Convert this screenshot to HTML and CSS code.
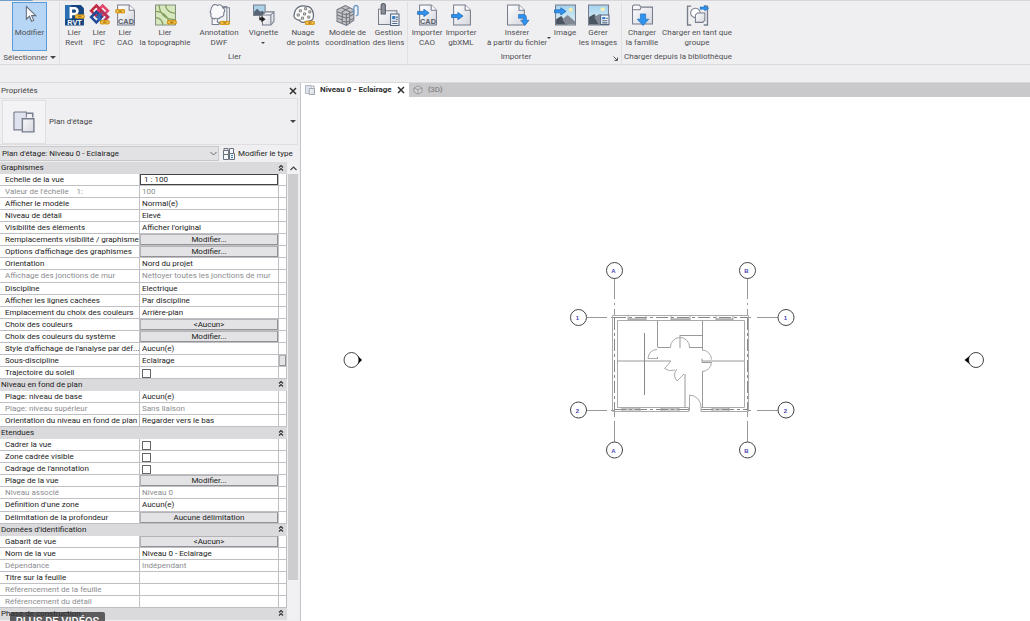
FILE: index.html
```html
<!DOCTYPE html>
<html lang="fr">
<head>
<meta charset="utf-8">
<title>Niveau 0 - Eclairage</title>
<link rel="stylesheet" href="styles.css">
</head>
<body>
<svg class="defs" aria-hidden="true">
  <defs>
    <linearGradient id="sheet" x1="0" y1="0" x2="1" y2="1"><stop offset="0" stop-color="#fff"/><stop offset="1" stop-color="#d5d7df"/></linearGradient>
    <linearGradient id="sky" x1="0" y1="0" x2="0" y2="1"><stop offset="0" stop-color="#a4d3ee"/><stop offset="1" stop-color="#e6f3f6"/></linearGradient>
    <symbol id="chain" viewBox="0 0 11 5"><rect x=".8" y=".9" width="5" height="3.2" rx="1.6" fill="#f7cf62" stroke="#d89a18" stroke-width="1.5"/><rect x="5.2" y=".9" width="5" height="3.2" rx="1.6" fill="#f7cf62" stroke="#d89a18" stroke-width="1.5"/><path d="M3.5 2.5h4" stroke="#a87718"/></symbol>
    <symbol id="arrow" viewBox="0 0 12 8"><path d="M.5 2.6h6V.5L11.5 4 6.500 7.500V5.400h-6z" fill="#2f92ee" stroke="#1b66b5" stroke-width=".7"/></symbol>
    <symbol id="views" viewBox="0 0 20 20"><path d="M1 1h11v5M1 1v16h7" fill="none" stroke="#777d8c" stroke-width="1.300"/><path d="M1.500 1.500h10v5H8.500v10h-7z" fill="#dfe3ef"/><path d="M12 2h6v4M8.500 7h10.500v12H8.500z" fill="url(#sheet)" stroke="#777d8c" stroke-width="1.300"/></symbol>
    <symbol id="fold" viewBox="0 0 6 8"><path d="M1 3.500 3 1.500l2 2M1 6.500l2-2 2 2" fill="none" stroke="#333" stroke-width="1.200"/></symbol>
  </defs>
</svg>

<header class="ribbon">
  <section class="group group-select">
    <div class="tools">
      <button class="tool active"><svg class="icon" viewBox="0 0 20 20"><path d="M7 2v12l3-2.800 2 4.800 2-.9-2-4.500h4z" fill="#fff" stroke="#646b78"/></svg><span>Modifier</span></button>
    </div>
    <button class="group-title">Sélectionner <i class="caret"></i></button>
  </section>
  <section class="group group-link">
    <div class="tools">
      <button class="tool"><svg class="icon" viewBox="0 0 20 20"><path d="M1 .5h15l3 3V20H1z" fill="#164680"/><path d="M1 .5h6V14H1z" fill="#2a6fb4"/><path d="M6.500 13V3.500h3.500a2.800 2.800 0 0 1 0 5.600H7" fill="none" stroke="#fff" stroke-width="2.400"/><text x="10" y="19.300" class="tag tag-light">RVT</text><use href="#chain" x="10" y="9" width="10" height="5"/></svg><span>Lier<br>Revit</span></button>
      <button class="tool"><svg class="icon" viewBox="0 0 20 20"><g fill="none" stroke-width="2.400"><path d="m2 6 5-5 5 5-5 5z" stroke="#c0283c"/><path d="m8 6 5-5 5 5-5 5z" stroke="#e4446b"/><path d="m2 12 5-5 5 5-5 5z" stroke="#234b97"/><path d="m8 12 5-5 5 5-5 5z" stroke="#2e67b4"/><path d="m7 1 5 5-2 2M13 7l5 5-4 4" stroke="#c52f50"/></g><use href="#chain" x="10" y="14.500" width="10" height="5"/></svg><span>Lier<br>IFC</span></button>
      <button class="tool"><svg class="icon" viewBox="0 0 20 20"><path d="M2.500 .5h11l5 5v14h-16z" fill="url(#sheet)" stroke="#777d8c"/><path d="M13.500.5v5h5" fill="#fff" stroke="#777d8c"/><text x="10.500" y="18.300" class="tag">CAD</text><use href="#chain" x="0" y="4" width="10" height="5"/></svg><span>Lier<br>CAO</span></button>
      <button class="tool"><svg class="icon" viewBox="0 0 20 20"><path d="M.5.500h19v19H.500z" fill="#d8e8be" stroke="#85907e"/><path d="M.5 12.500a7 7 0 0 1 7 7M.500 6.500a13 13 0 0 1 13 13M4 .5c0 8 6 14 15 14M10 .5c0 4 4 8 9.500 8" fill="none" stroke="#86a263" stroke-width="1.300"/><use href="#chain" x="11" y="14.500" width="10" height="5"/></svg><span>Lier<br>la topographie</span></button>
      <button class="tool"><svg class="icon" viewBox="0 0 20 20"><path d="M8 3h11.500v15H8zM5 2h12v15H5z" fill="#eef0f5" stroke="#858a96"/><path d="M3 2a3 3 0 0 1 5-1 3 3 0 0 1 5 2 3 3 0 0 1 1 5 3 3 0 0 1-3 4 4 4 0 0 1-5 1 3 3 0 0 1-4-4 3 3 0 0 1 0-4 3 3 0 0 1 1-3zM3 13v6h7" fill="#fafafc" stroke="#777d8c"/><use href="#chain" x="10" y="15" width="10" height="5"/></svg><span>Annotation<br>DWF</span></button>
      <button class="tool"><svg class="icon" viewBox="0 0 20 20"><path d="M.5.500h11v10H.500z" fill="#add1e7" stroke="#777d8c"/><path d="M1 10V7l3-3 3 3 2-1 2 2v2z" fill="#596474"/><path d="m9 10 3-3h8v9l-3 3.500H9z" fill="url(#sheet)" stroke="#777d8c"/><path d="M9 10h8v9M17 10l3-3" fill="none" stroke="#777d8c"/><path d="M6 11v4h2v2l4-3-4-3v2" fill="#222"/></svg><span>Vignette<br><i class="caret small"></i></span></button>
      <button class="tool"><svg class="icon" viewBox="0 0 20 20"><path d="M2 6C4 2 8 1 12 1.500c5 0 7 4 7.500 8 .5 5-2 7-7 6.500-2 2-6 1-6-1-4 0-6-3-5.500-5z" fill="#fcfcfd" stroke="#666c78" stroke-width="1.200"/><path d="M6 5h2v2H6zM11 3h2v2h-2zM15 6h2v2h-2zM4 9h2v2H4zM10 8h2v2h-2zM8 12h2v2H8zM14 11h2v2h-2z" fill="#ddd" stroke="#666" stroke-width=".7"/><use href="#chain" x="11" y="15" width="10" height="5"/></svg><span>Nuage<br>de points</span></button>
      <button class="tool"><svg class="icon" viewBox="0 0 20 20"><path d="m0 5 8-4 8 4v10l-7 5-9-4z" fill="#c2c4c9" stroke="#74777f"/><path d="m0 10 9 3 7-4M4 3l8 4v11M12 3 5 7v11M9 8v12M0 7l9 3 7-4M1 13l8 4 7-4" fill="none" stroke="#74777f"/><path d="M16 9V3a2 2 0 0 1 4 0v6a1.500 1.500 0 0 1-2 1.500" fill="none" stroke="#6a9bc9" stroke-width="1.300"/></svg><span>Modèle de<br>coordination</span></button>
      <button class="tool"><svg class="icon" viewBox="0 0 20 20"><path d="M.5 4.500h4L6 6h12v13H.500z" fill="url(#sheet)" stroke="#777d8c"/><path d="M3 1a2 2 0 0 1 4 0v8H3z" fill="#8c9099" stroke="#555b65"/><path d="M12 9h8v11h-8z" fill="#f2f6fb" stroke="#536681"/><path d="M13.500 11h3v3h-3z" fill="#347bc0"/><path d="M17 12h2M17 14h2M13.500 16h5M13.500 18h5" stroke="#536681"/></svg><span>Gestion<br>des liens</span></button>
    </div>
    <h2 class="group-title">Lier</h2>
  </section>
  <section class="group group-import">
    <div class="tools">
      <button class="tool"><svg class="icon" viewBox="0 0 20 20"><path d="M2.500.500h11l5 5v14h-16z" fill="url(#sheet)" stroke="#777d8c"/><path d="M13.500.500v5h5" fill="#fff" stroke="#777d8c"/><use href="#arrow" x="0" y="4" width="12" height="8"/><text x="10.500" y="18.500" class="tag">CAD</text></svg><span>Importer<br>CAO</span></button>
      <button class="tool"><svg class="icon" viewBox="0 0 20 20"><path d="M2.500.500h11l5 5v14h-16z" fill="url(#sheet)" stroke="#777d8c"/><path d="M13.500.500v5h5" fill="#fff" stroke="#777d8c"/><use href="#arrow" x="0" y="7" width="12" height="8"/></svg><span>Importer<br>gbXML</span></button>
      <button class="tool"><svg class="icon" viewBox="0 0 20 20"><path d="M.5.500h11l5 5v14H.500z" fill="url(#sheet)" stroke="#777d8c"/><path d="M11.500.500v5h5" fill="#fff" stroke="#777d8c"/><path d="M11 9.500h4.500q3 0 3 3V15H21l-4 5-4-5h2.500v-2H11z" fill="#2f92ee" stroke="#1b66b5" stroke-width=".6"/></svg><span>Insérer<br>à partir du fichier</span><i class="caret small side"></i></button>
      <button class="tool"><svg class="icon" viewBox="0 0 20 20"><path d="M.5.500h19v19H.500z" fill="url(#sky)" stroke="#777d8c"/><circle cx="15" cy="5" r="2" fill="#f6edae"/><path d="m1 14 5-3 6 8H1z" fill="#4b5562"/><path d="m7 14 5-4 7 6v3H10z" fill="#828994"/><use href="#arrow" x="-1" y="2.500" width="12" height="8"/></svg><span>Image</span></button>
      <button class="tool"><svg class="icon" viewBox="0 0 20 20"><path d="M.5.500h19v19H.500z" fill="url(#sky)" stroke="#777d8c"/><circle cx="14" cy="4.500" r="2" fill="#f6edae"/><path d="m1 12 5-3 7 10H1z" fill="#4b5562"/><path d="m6 12 5-3 8 6v4h-9z" fill="#828994"/><path d="M12 10h8v9h-8z" fill="#f2f6fb" stroke="#536681"/><path d="M13.500 12h3v2h-3z" fill="#347bc0"/><path d="M17 13h2M13.500 15.500h5M13.500 17.500h5" stroke="#536681"/></svg><span>Gérer<br>les images</span></button>
    </div>
    <h2 class="group-title">Importer</h2><button class="launcher" aria-label="Options d'importation"><svg viewBox="0 0 5 5"><path d="M.5 .5 4 4M4.500 1.500v3h-3" fill="none" stroke="#555"/></svg></button>
  </section>
  <section class="group group-load">
    <div class="tools">
      <button class="tool"><svg class="icon" viewBox="0 0 20 20"><path d="M.5 1.500v17h19v-16h-11L7 .5H2z" fill="url(#sheet)" stroke="#777d8c"/><path d="M.5 5h7l1-2" fill="none" stroke="#777d8c"/><path d="M8 9h5v5h3l-5.500 6L5 14h3z" fill="#2f92ee" stroke="#1b66b5" stroke-width=".6"/></svg><span>Charger<br>la famille</span></button>
      <button class="tool"><svg class="icon" viewBox="0 0 20 20"><path d="M4 1.500H.500v18H4M16 1.500h3.500v18H16" fill="none" stroke="#777d8c" stroke-width="1.300"/><circle cx="8" cy="8" r="4.500" fill="#fff" stroke="#777d8c"/><path d="m8 10 2-2h7v7l-2 2H8z" fill="url(#sheet)" stroke="#777d8c"/><use href="#arrow" x="12" y="0" width="9" height="7"/></svg><span>Charger en tant que<br>groupe</span></button>
    </div>
    <h2 class="group-title">Charger depuis la bibliothèque</h2>
  </section>
</header>
<div class="option-bar"></div>

<div class="workspace">
  <aside class="properties">
    <div class="panel-head"><h2>Propriétés</h2><button class="close" aria-label="Fermer les propriétés"><svg viewBox="0 0 8 8"><path d="m1 1 6 6M7 1 1 7" stroke="#333" stroke-width="1.500"/></svg></button></div>
    <button class="type-picker"><span class="thumb"><svg viewBox="0 0 20 20"><use href="#views"/></svg></span><span>Plan d'étage</span><i class="caret"></i></button>
    <div class="instance">
      <div class="select-wrap"><select aria-label="Vue"><option>Plan d'étage: Niveau 0 - Eclairage</option></select><svg viewBox="0 0 7 5"><path d="m.5 1 3 3 3-3" fill="none" stroke="#666"/></svg></div>
      <button class="edit-type"><svg viewBox="0 0 12 12"><path d="M.5 2.500h5v4h-5zM.5 6.500h5v5h-5zM6.500 .500h4v5h-4zM1 2.500v-2h4v2M6.500 5.500h5v6h-5z" fill="#f4f6fa" stroke="#68707e"/><path d="M8 7.500h2M8 9.500h2" stroke="#347bc0"/></svg>Modifier le type</button>
    </div>
    <div class="grid-area">
      <table>
        <tbody>
          <tr class="section"><th colspan="3"><button>Graphismes<svg><use href="#fold"/></svg></button></th></tr>
          <tr><th><label for="scale">Echelle de la vue</label></th><td><input class="field" id="scale" type="text" value="1 : 100"></td><td></td></tr>
          <tr class="off"><th>Valeur de l'échelle &nbsp;&nbsp; 1:</th><td>100</td><td></td></tr>
          <tr><th>Afficher le modèle</th><td>Normal(e)</td><td></td></tr>
          <tr><th>Niveau de détail</th><td>Elevé</td><td></td></tr>
          <tr><th>Visibilité des éléments</th><td>Afficher l'original</td><td></td></tr>
          <tr><th id="p1">Remplacements visibilité / graphisme</th><td><button class="cell" aria-describedby="p1">Modifier...</button></td><td></td></tr>
          <tr><th id="p2">Options d'affichage des graphismes</th><td><button class="cell" aria-describedby="p2">Modifier...</button></td><td></td></tr>
          <tr><th>Orientation</th><td>Nord du projet</td><td></td></tr>
          <tr class="off"><th>Affichage des jonctions de mur</th><td>Nettoyer toutes les jonctions de mur</td><td></td></tr>
          <tr><th>Discipline</th><td>Electrique</td><td></td></tr>
          <tr><th>Afficher les lignes cachées</th><td>Par discipline</td><td></td></tr>
          <tr><th>Emplacement du choix des couleurs</th><td>Arrière-plan</td><td></td></tr>
          <tr><th id="p3">Choix des couleurs</th><td><button class="cell" aria-describedby="p3">&lt;Aucun&gt;</button></td><td></td></tr>
          <tr><th id="p4">Choix des couleurs du système</th><td><button class="cell" aria-describedby="p4">Modifier...</button></td><td></td></tr>
          <tr><th>Style d'affichage de l'analyse par déf...</th><td>Aucun(e)</td><td></td></tr>
          <tr><th>Sous-discipline</th><td>Eclairage</td><td><button class="cell" aria-label="Associer la sous-discipline"></button></td></tr>
          <tr><th><label for="sun">Trajectoire du soleil</label></th><td><input type="checkbox" id="sun"></td><td></td></tr>
          <tr class="section"><th colspan="3"><button>Niveau en fond de plan<svg><use href="#fold"/></svg></button></th></tr>
          <tr><th>Plage: niveau de base</th><td>Aucun(e)</td><td></td></tr>
          <tr class="off"><th>Plage: niveau supérieur</th><td>Sans liaison</td><td></td></tr>
          <tr><th>Orientation du niveau en fond de plan</th><td>Regarder vers le bas</td><td></td></tr>
          <tr class="section"><th colspan="3"><button>Etendues<svg><use href="#fold"/></svg></button></th></tr>
          <tr><th><label for="crop">Cadrer la vue</label></th><td><input type="checkbox" id="crop"></td><td></td></tr>
          <tr><th><label for="zone">Zone cadrée visible</label></th><td><input type="checkbox" id="zone"></td><td></td></tr>
          <tr><th><label for="note">Cadrage de l'annotation</label></th><td><input type="checkbox" id="note"></td><td></td></tr>
          <tr><th id="p5">Plage de la vue</th><td><button class="cell" aria-describedby="p5">Modifier...</button></td><td></td></tr>
          <tr class="off"><th>Niveau associé</th><td>Niveau 0</td><td></td></tr>
          <tr><th>Définition d'une zone</th><td>Aucun(e)</td><td></td></tr>
          <tr><th id="p6">Délimitation de la profondeur</th><td><button class="cell" aria-describedby="p6">Aucune délimitation</button></td><td></td></tr>
          <tr class="section"><th colspan="3"><button>Données d'identification<svg><use href="#fold"/></svg></button></th></tr>
          <tr><th id="p7">Gabarit de vue</th><td><button class="cell" aria-describedby="p7">&lt;Aucun&gt;</button></td><td></td></tr>
          <tr><th>Nom de la vue</th><td>Niveau 0 - Eclairage</td><td></td></tr>
          <tr class="off"><th>Dépendance</th><td>Indépendant</td><td></td></tr>
          <tr><th>Titre sur la feuille</th><td></td><td></td></tr>
          <tr class="off"><th>Référencement de la feuille</th><td></td><td></td></tr>
          <tr class="off"><th>Référencement du détail</th><td></td><td></td></tr>
          <tr class="section"><th colspan="3"><button>Phase de construction<svg><use href="#fold"/></svg></button></th></tr>
        </tbody>
      </table>
      <div class="scrollbar"><svg viewBox="0 0 7 5"><path d="m.5 4 3-3 3 3" fill="none" stroke="#444" stroke-width="1.200"/></svg><span class="thumb-bar"></span></div>
    </div>
  </aside>

  <main class="view">
    <nav class="tabs">
      <div class="tab current"><svg viewBox="0 0 20 20"><use href="#views"/></svg><a href="#plan">Niveau 0 - Eclairage</a><button class="close" aria-label="Fermer la vue"><svg viewBox="0 0 8 8"><path d="m1 1 6 6M7 1 1 7" stroke="#333" stroke-width="1.500"/></svg></button></div>
      <div class="tab"><svg viewBox="0 0 10 10"><path d="m1 3 4-2 4 2v4L5 9 1 7zM1 3l4 2 4-2M5 5v4" fill="#d9d9dc" stroke="#999"/></svg><a href="#3d">{3D}</a></div>
    </nav>
    <svg class="plan" id="plan" viewBox="301 97 729 524" preserveAspectRatio="xMidYMin meet">
      <g class="axis">
        <path d="M614.500 278v21M614.500 303v2M614.500 309v7M747.500 278v21M747.500 303v2M747.500 309v7M614.500 412v5M614.500 421v21M747.500 412v5M747.500 421v21M587 317.500h20M611 317.500h4M747 317.500h4M757 317.500h21M587 410.500h20M611 410.500h4M747 410.500h4M757 410.500h21"/>
        <path class="dash" d="M614.500 318v92M747.500 318v92M614 317.500h133M614 409.500h75M701 409.500h46"/>
      </g>
      <g class="wall">
        <path d="M688.500 411.500h-76v-96h136v96h-47.500v-4h43.500v-87h-127v87h71z"/>
        <path d="M628 316v4h18v-4M671 316v4h19v-4M716 316v4h17v-4M622 408v3h18v-3M661 408v3h18v-3M712 408v3h17v-3"/>
      </g>
      <g class="glass"><path d="M628 319h18M671 319h19M716 319h17M622 409h18M661 409h18M712 409h17"/></g>
      <g class="partition">
        <path d="M657.500 321v26M657.500 347.500h13M689 347.500h13M702.500 321v29M702.500 371v37M702 361h42M617 361h54M702 358.500v4h9.500M680 335.500h22M680 335v13M685 374v34M657.500 357v2"/>
        <path class="heavy" d="M644.500 333v62"/>
      </g>
      <g class="door">
        <path d="M657 349.500a9 9 0 0 0-9 9h9.500M670.500 347.500a9.500 9.500 0 0 1 9-10a9.500 9.500 0 0 1 10 10M702 350a9.500 9.500 0 0 1 9.500 9.500M711.500 362a9.500 9.500 0 0 1-9.500 9.500M671 361l-6.500 7.500q5 3.500 10.500 1.500M677 369q-5 6 0 12l7-7M689.500 411v-16a12 12 0 0 1 11.500 12.500"/>
      </g>
      <g class="bubbles">
        <circle cx="614.500" cy="270.500" r="8"/><circle cx="747.500" cy="270.500" r="8"/><circle cx="614.500" cy="450" r="8"/><circle cx="747.500" cy="450" r="8"/>
        <circle cx="578.500" cy="317.500" r="8"/><circle cx="786" cy="317.500" r="8"/><circle cx="578.500" cy="410" r="8"/><circle cx="786" cy="410" r="8"/>
        <circle cx="351.500" cy="360" r="7.500"/><circle cx="976" cy="360" r="7.500"/>
      </g>
      <g class="bubble-text">
        <text x="613.500" y="273">A</text><text x="746.500" y="273">B</text><text x="613.500" y="453">A</text><text x="746.500" y="453">B</text>
        <text x="577.500" y="320">1</text><text x="785.500" y="320">1</text><text x="577.500" y="412.500">2</text><text x="785.500" y="412.500">2</text>
      </g>
      <path d="M358 356l4 4-4 4q2-4 0-8zM969.500 356l-5 4 5 4q-2-4 0-8z"/>
    </svg>
  </main>
</div>
<div class="toast">PLUS DE VIDÉOS</div>
</body>
</html>
```

FILE: styles.css
```css
* { box-sizing: border-box; }
html, body { height: 100%; }
body {
  margin: 0;
  display: flex;
  flex-direction: column;
  overflow: hidden;
  background: #efeff1;
  color: #222;
  font: 8px/10px Roboto, "Open Sans", sans-serif;
}
button, input, select {
  font: inherit;
  color: inherit;
  margin: 0;
  padding: 0;
  border: 0;
  background: none;
}
h2 { margin: 0; font: inherit; }
.defs { position: absolute; width: 0; height: 0; }

.caret {
  display: inline-block;
  border: 3px solid transparent;
  border-top-color: #444;
  border-bottom: 0;
  vertical-align: middle;
}
.caret.small { border-width: 2px; border-bottom: 0; }

/* Ribbon */
.ribbon {
  flex: none;
  display: flex;
  height: 65px;
  border-top: 2px solid #dcdcdf;
  border-image: linear-gradient(to right, #6d9dc8 34px, #d7d7da 35px) 2;
  border-image-width: 1px 0 0;
  box-shadow: inset 0 -1px #dadadd;
  color: #505054;
}
.group {
  position: relative;
  display: flex;
  flex-direction: column;
  border-right: 1px solid #e0e0e3;
}
.group:last-child { border-right: 0; }
.tools { display: grid; flex: 1; }
.group-select { width: 60px; }
.group-select .tools { padding: 0 12px; }
.group-link { padding-left: 2px; }
.group-link .tools { grid-template-columns: 24px 26px 26px 54px 54px 35px 44px 45px 37px; }
.group-import { padding-left: 3px; }
.group-import .tools { grid-template-columns: 32px 36px 76px 20px 46px; }
.group-load { padding-left: 1px; }
.group-load .tools { grid-template-columns: 38px 72px; }
.tool {
  position: relative;
  display: flex;
  flex-direction: column;
  align-items: center;
  gap: 2px;
  min-width: 0;
  padding-top: 2px;
  white-space: nowrap;
}
.tool.active {
  padding-top: 1px;
  background: #b7d5f5;
  border: 1px solid #5b9bd8;
}
.icon { width: 21px; height: 22px; flex: none; overflow: visible; }
.side { position: absolute; right: 4px; top: 35px; }
.tag {
  font: 700 7px "Liberation Sans", sans-serif;
  text-anchor: middle;
  fill: #555b66;
}
.tag-light { fill: #fff; }
.group-title { height: 14px; line-height: 12px; text-align: center; white-space: nowrap; }
.launcher { position: absolute; right: 3px; bottom: 4px; width: 5px; height: 5px; }
.launcher svg { display: block; }
.option-bar { flex: none; height: 18px; border-bottom: 1px solid #dadadd; }

/* Properties palette */
.workspace { flex: 1; display: flex; min-height: 0; }
.properties {
  width: 301px;
  flex: none;
  display: flex;
  flex-direction: column;
  border-right: 1px solid #c4c4c8;
}
.panel-head {
  display: flex;
  align-items: center;
  justify-content: space-between;
  height: 15px;
  padding: 0 3px 0 1px;
  color: #444;
}
.close { width: 8px; height: 8px; }
.close svg { display: block; }
.type-picker {
  display: flex;
  align-items: center;
  gap: 3px;
  height: 47px;
  margin-right: 2px;
  padding: 0 1px 0 2px;
  border: 1px solid #dfdfe2;
  border-left: 0;
  color: #444;
}
.type-picker .caret { margin-left: auto; }
.thumb {
  display: grid;
  place-items: center;
  width: 44px;
  height: 44px;
  background: #f3f3f5;
  border: 1px solid #dfdfe2;
}
.thumb svg { width: 22px; height: 22px; }
.instance { display: flex; align-items: center; gap: 4px; height: 17px; }
.select-wrap { position: relative; width: 219px; height: 15px; }
.select-wrap select {
  appearance: none;
  width: 100%;
  height: 100%;
  padding: 0 2px;
  background: #e2e2e4;
  border: 1px solid #c8c8cb;
  border-left: 0;
}
.select-wrap svg { position: absolute; right: 2px; top: 5px; width: 7px; height: 5px; }
.edit-type { display: flex; align-items: center; gap: 3px; white-space: nowrap; }
.edit-type svg { width: 12px; height: 12px; }

/* Property grid */
.grid-area { flex: 1; display: flex; min-height: 0; padding-bottom: 1px; }
table { display: flex; width: 287px; background: #fff; }
tbody { flex: 1; display: grid; grid-auto-rows: minmax(12px, 1fr); }
tr { display: grid; grid-template-columns: 140px 139px 8px; min-height: 0; }
tr.section { grid-template-columns: 1fr; background: #dadadc; }
th, td {
  min-width: 0;
  padding: 0;
  font-weight: 400;
  text-align: left;
  line-height: 11px;
  white-space: nowrap;
  border-right: 1px solid #c0c0c4;
  border-bottom: 1px solid #c0c0c4;
}
th { padding-left: 5px; }
td { padding-left: 2px; }
td:last-child { padding: 0; }
.section th { padding: 0; border-color: #dadadc; }
.section button {
  display: flex;
  align-items: center;
  justify-content: space-between;
  width: 100%;
  height: 100%;
  padding: 0 2px 0 1px;
}
.section svg { width: 6px; height: 8px; }
.off { color: #8c8c90; }
td:has(.field), td:has(.cell) { padding: 0; }
.cell {
  display: block;
  width: 100%;
  height: 100%;
  line-height: 9px;
  background: #e3e3e5;
  border: 1px solid #b4b4b8;
  border-right-color: #929296;
  border-bottom-color: #929296;
}
.field {
  display: block;
  width: 100%;
  height: 100%;
  padding: 0 3px;
  line-height: 9px;
  border: 1px solid #444;
}
input[type="checkbox"] {
  appearance: none;
  display: block;
  width: 9px;
  height: 9px;
  margin-top: 2px;
  border: 1px solid #666;
  background: #fff;
}
.scrollbar {
  flex: 1;
  display: grid;
  grid-template-rows: 12px 1fr;
  justify-items: center;
  align-items: center;
  margin: 0 2px 0 1px;
  padding-bottom: 40px;
  background: #f1f1f3;
}
.scrollbar svg { width: 7px; height: 5px; }
.thumb-bar { width: 100%; height: 100%; background: #cdcdcf; }

/* Drawing view */
.view { flex: 1; display: flex; flex-direction: column; min-width: 0; background: #fff; }
.tabs { flex: none; display: flex; height: 14px; background: #c9c9cc; }
.tab { display: flex; align-items: center; gap: 5px; padding: 0 4px; color: #777; }
.tab a { color: inherit; text-decoration: none; }
.tab > svg { width: 10px; height: 10px; }
.tab.current { background: #fff; color: #333; font-weight: 700; }
.plan { display: block; flex: 1; width: 100%; min-height: 0; }
.plan path, .plan circle { stroke-width: 1; }
.axis path { stroke: #999; fill: none; }
.axis .dash { stroke: #888; stroke-dasharray: 12 3 3 3; }
.wall path { fill: none; stroke: #aaa; }
.glass path { stroke: #888; }
.partition path { fill: none; stroke: #999; }
.partition .heavy { stroke: #888; }
.door path { fill: none; stroke: #aaa; }
.bubbles circle { fill: #fff; stroke: #444; }
.bubble-text { font: 700 6px "Liberation Sans", sans-serif; text-anchor: middle; fill: #4a3fb5; }

.toast {
  position: absolute;
  left: 10px;
  bottom: 0;
  width: 95px;
  height: 9px;
  padding-top: 4px;
  overflow: hidden;
  background: rgba(50, 50, 52, .75);
  border-radius: 2px 2px 0 0;
  color: #fff;
  font: 500 11px/12px Roboto, sans-serif;
  text-align: center;
  white-space: nowrap;
}
```
